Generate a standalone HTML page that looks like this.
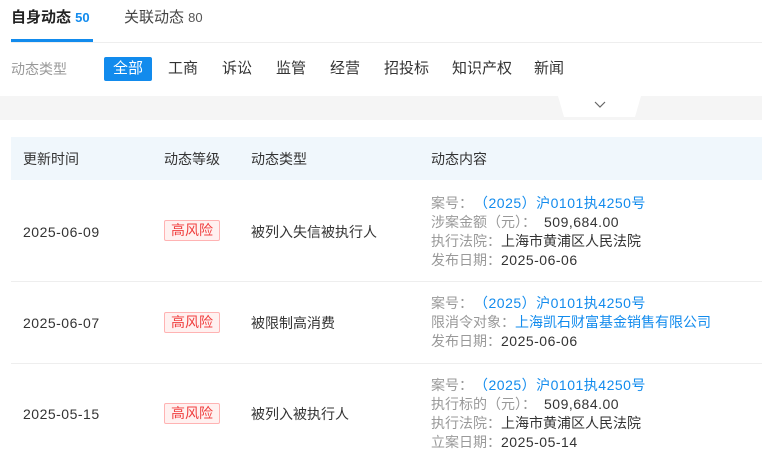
<!DOCTYPE html>
<html><head><meta charset="utf-8"><style>
*{margin:0;padding:0;box-sizing:border-box}
body{width:762px;height:461px;overflow:hidden;background:#fff;font-family:"Liberation Sans","Noto Sans CJK SC",sans-serif;font-size:14px;color:#333;position:relative}
.a{position:absolute;white-space:nowrap;line-height:20px}
.g{color:#999}.l{color:#128bed}
.n{letter-spacing:0.5px}
.tag{position:absolute;left:164px;width:56px;height:21px;border:1px solid #ffb3b3;background:#fff1f0;color:#f04040;font-size:14px;line-height:19px;text-align:center;border-radius:2px}
.bd{position:absolute;left:11px;right:0;height:1px;background:#eee}
.c{margin-left:8px}
</style></head><body>
<div class="a" style="left:11px;top:8px;font-size:15px;font-weight:bold;color:#222">自身动态 <span style="color:#128bed;font-size:13px">50</span></div>
<div class="a" style="left:124px;top:8px;font-size:15px;color:#444">关联动态 <span style="color:#555;font-size:13px">80</span></div>
<div style="position:absolute;left:11px;top:39px;width:82px;height:3px;background:#128bed"></div>
<div class="bd" style="top:42px"></div>
<div class="a g" style="left:11px;top:59px">动态类型</div>
<div style="position:absolute;left:104px;top:57px;width:48px;height:24px;background:#128bed;border-radius:2px;color:#fff;text-align:center;line-height:24px;font-size:15px">全部</div>
<div class="a" style="left:168px;top:59px;font-size:15px">工商</div>
<div class="a" style="left:222px;top:59px;font-size:15px">诉讼</div>
<div class="a" style="left:276px;top:59px;font-size:15px">监管</div>
<div class="a" style="left:330px;top:59px;font-size:15px">经营</div>
<div class="a" style="left:384px;top:59px;font-size:15px">招投标</div>
<div class="a" style="left:452px;top:59px;font-size:15px">知识产权</div>
<div class="a" style="left:534px;top:59px;font-size:15px">新闻</div>
<div style="position:absolute;left:0;top:96px;width:762px;height:24px;background:#f5f5f5"></div>
<svg style="position:absolute;left:558px;top:96px" width="83" height="22"><polygon points="0,0 83,0 77,21 6,21" fill="#fff"/><polyline points="37,6 42,11 47,6" fill="none" stroke="#666" stroke-width="1.2"/></svg>
<div style="position:absolute;left:11px;top:137px;width:751px;height:43px;background:#f0f7fc"></div>
<div class="a" style="left:23px;top:149px">更新时间</div>
<div class="a" style="left:164px;top:149px">动态等级</div>
<div class="a" style="left:251px;top:149px">动态类型</div>
<div class="a" style="left:431px;top:149px">动态内容</div>

<div class="a n" style="left:23px;top:222px">2025-06-09</div>
<div class="tag" style="top:220px">高风险</div>
<div class="a" style="left:251px;top:222px">被列入失信被执行人</div>
<div class="a" style="left:431px;top:193px"><span class="g">案号：</span><span class="l c n">（2025）沪0101执4250号</span></div>
<div class="a" style="left:431px;top:212px"><span class="g">涉案金额（元）：</span><span class="c n">509,684.00</span></div>
<div class="a" style="left:431px;top:231px"><span class="g">执行法院：</span>上海市黄浦区人民法院</div>
<div class="a" style="left:431px;top:250px"><span class="g">发布日期：</span><span class="n">2025-06-06</span></div>
<div class="bd" style="top:281px"></div>

<div class="a n" style="left:23px;top:313px">2025-06-07</div>
<div class="tag" style="top:312px">高风险</div>
<div class="a" style="left:251px;top:313px">被限制高消费</div>
<div class="a" style="left:431px;top:293px"><span class="g">案号：</span><span class="l c n">（2025）沪0101执4250号</span></div>
<div class="a" style="left:431px;top:312px"><span class="g">限消令对象：</span><span class="l">上海凯石财富基金销售有限公司</span></div>
<div class="a" style="left:431px;top:331px"><span class="g">发布日期：</span><span class="n">2025-06-06</span></div>
<div class="bd" style="top:363px"></div>

<div class="a n" style="left:23px;top:404px">2025-05-15</div>
<div class="tag" style="top:403px">高风险</div>
<div class="a" style="left:251px;top:404px">被列入被执行人</div>
<div class="a" style="left:431px;top:375px"><span class="g">案号：</span><span class="l c n">（2025）沪0101执4250号</span></div>
<div class="a" style="left:431px;top:394px"><span class="g">执行标的（元）：</span><span class="c n">509,684.00</span></div>
<div class="a" style="left:431px;top:413px"><span class="g">执行法院：</span>上海市黄浦区人民法院</div>
<div class="a" style="left:431px;top:432px"><span class="g">立案日期：</span><span class="n">2025-05-14</span></div>
</body></html>
